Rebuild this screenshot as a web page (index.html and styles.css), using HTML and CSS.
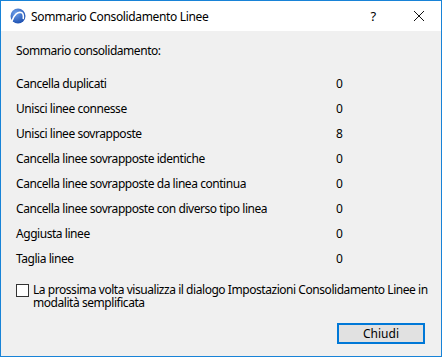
FILE: index.html
```html
<!DOCTYPE html>
<html lang="it">
<head>
    <meta charset="UTF-8">
    <title>Sommario Consolidamento Linee</title>
    <link rel="stylesheet" href="styles.css">
</head>
<body>
<div class="dialog">
    <div class="titlebar">
        <svg class="app-icon" width="16" height="16" viewBox="0 0 16 16">
            <defs>
                <radialGradient id="g" cx="35%" cy="30%" r="75%">
                    <stop offset="0" stop-color="#6d9ee8"/>
                    <stop offset="1" stop-color="#1c4fb0"/>
                </radialGradient>
            </defs>
            <circle cx="8" cy="8" r="7.5" fill="url(#g)"/>
            <path d="M2.2 12.6 C4 6.5 8 3.6 11.2 4.6 C13 5.2 13.6 7.5 13.3 10.5" fill="none" stroke="#fff" stroke-width="1.6" stroke-linecap="round"/>
        </svg>
        <span class="title">Sommario Consolidamento Linee</span>
        <span class="tb-btn help">?</span>
        <span class="tb-btn close">
            <svg width="12" height="12" viewBox="0 0 12 12"><path d="M1 1 L11 11 M11 1 L1 11" stroke="#111" stroke-width="1"/></svg>
        </span>
    </div>

    <div class="content">
        <div class="heading">Sommario consolidamento:</div>

        <div class="summary">
            <span>Cancella duplicati</span><span>0</span>
            <span>Unisci linee connesse</span><span>0</span>
            <span>Unisci linee sovrapposte</span><span>8</span>
            <span>Cancella linee sovrapposte identiche</span><span>0</span>
            <span>Cancella linee sovrapposte da linea continua</span><span>0</span>
            <span>Cancella linee sovrapposte con diverso tipo linea</span><span>0</span>
            <span>Aggiusta linee</span><span>0</span>
            <span>Taglia linee</span><span>0</span>
        </div>

        <label class="option">
            <span class="box"></span>
            <span>La prossima volta visualizza il dialogo Impostazioni Consolidamento Linee in modalità semplificata</span>
        </label>

        <div class="actions">
            <button type="button">Chiudi</button>
        </div>
    </div>
</div>
</body>
</html>
```

FILE: styles.css
```css
body { margin: 0; font-family: "Noto Sans", "Open Sans", sans-serif; font-size: 12px; letter-spacing: -0.45px; color: #000; }
.dialog { width: 442px; height: 357px; box-sizing: border-box; border: 1px solid #1883d7; background: #f0f0f0; display: flex; flex-direction: column; }
.titlebar { height: 30px; background: #fff; display: flex; align-items: center; }
.app-icon { margin-left: 9px; }
.title { margin-left: 5px; flex: 1; font-size: 12px; letter-spacing: -0.35px; }
.tb-btn { display: flex; align-items: center; justify-content: center; }
.help { width: 46px; font-size: 13px; }
.close { width: 46px; margin-right: -1px; }
.content { flex: 1; padding: 8px 15px 0; display: flex; flex-direction: column; }
.heading { line-height: 24px; margin-bottom: 8px; }
.summary { display: grid; grid-template-columns: 320px 1fr; grid-auto-rows: 25px; align-items: center; }
.option { display: flex; gap: 4px; margin-top: 12px; margin-right: -12px; line-height: 13px; }
.box { flex: none; width: 11px; height: 11px; border: 1px solid #333; background: #fff; margin-top: 1px; }
.actions { margin-top: auto; margin-bottom: 12px; display: flex; justify-content: flex-end; padding-right: 1px; }
button { width: 88px; height: 21px; box-sizing: border-box; border: 2px solid #0078d7; background: #e1e1e1; font: inherit; padding: 0; }
```
